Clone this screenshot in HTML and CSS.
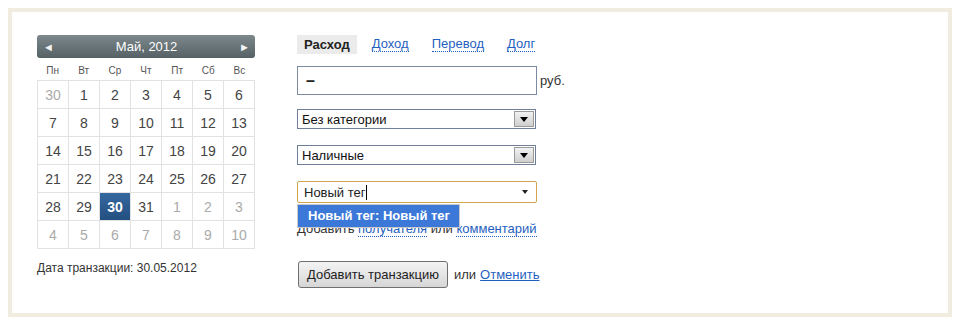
FILE: index.html
```html
<!DOCTYPE html>
<html lang="ru">
<head>
    <meta charset="UTF-8">
    <title>Новая транзакция</title>
    <link rel="stylesheet" href="styles.css">
</head>
<body>
    <div class="frame">
        <div class="calendar-col">
            <div class="cal-header">
                <span class="cal-arrow">&#9668;</span>
                <span class="cal-title">Май, 2012</span>
                <span class="cal-arrow">&#9658;</span>
            </div>
            <div class="cal-weekdays">
                <span>Пн</span><span>Вт</span><span>Ср</span><span>Чт</span><span>Пт</span><span>Сб</span><span>Вс</span>
            </div>
            <div class="cal-grid">
                <div class="day other">30</div><div class="day">1</div><div class="day">2</div><div class="day">3</div><div class="day">4</div><div class="day">5</div><div class="day">6</div>
                <div class="day">7</div><div class="day">8</div><div class="day">9</div><div class="day">10</div><div class="day">11</div><div class="day">12</div><div class="day">13</div>
                <div class="day">14</div><div class="day">15</div><div class="day">16</div><div class="day">17</div><div class="day">18</div><div class="day">19</div><div class="day">20</div>
                <div class="day">21</div><div class="day">22</div><div class="day">23</div><div class="day">24</div><div class="day">25</div><div class="day">26</div><div class="day">27</div>
                <div class="day">28</div><div class="day">29</div><div class="day selected">30</div><div class="day">31</div><div class="day other">1</div><div class="day other">2</div><div class="day other">3</div>
                <div class="day other">4</div><div class="day other">5</div><div class="day other">6</div><div class="day other">7</div><div class="day other">8</div><div class="day other">9</div><div class="day other">10</div>
            </div>
            <div class="cal-date">Дата транзакции: 30.05.2012</div>
        </div>

        <div class="form-col">
            <div class="tabs">
                <span class="tab active">Расход</span>
                <a href="#" class="tab">Доход</a>
                <a href="#" class="tab">Перевод</a>
                <a href="#" class="tab">Долг</a>
            </div>

            <div class="amount-row">
                <div class="amount-input">&ndash;</div>
                <span class="currency">руб.</span>
            </div>

            <div class="select select-category">
                <span>Без категории</span>
                <span class="select-btn"></span>
            </div>

            <div class="select select-account">
                <span>Наличные</span>
                <span class="select-btn"></span>
            </div>

            <div class="tag-wrap">
                <div class="tag-input">
                    <span>Новый тег<span class="caret"></span></span>
                    <span class="tag-arrow"></span>
                </div>
                <div class="tag-suggest">Новый тег: Новый тег</div>
            </div>

            <div class="extra">
                Добавить <a href="#" class="dotted">получателя</a> или <a href="#" class="dotted">комментарий</a>
            </div>

            <div class="actions">
                <button class="btn-submit">Добавить транзакцию</button>
                <span class="or">или</span>
                <a href="#" class="cancel">Отменить</a>
            </div>
        </div>
    </div>
</body>
</html>
```

FILE: styles.css
```css
body {
    margin: 8px;
    background-color: #fff;
    font-family: "Liberation Sans", Arial, sans-serif;
    color: #222;
}

.frame {
    border: 4px solid #f0ede0;
    display: flex;
    padding: 23px 25px 0 25px;
    height: 278px;
}

/* календарь */
.calendar-col {
    width: 218px;
}

.cal-header {
    height: 23px;
    border-radius: 3px;
    background: linear-gradient(#7c888b, #556164);
    color: #fff;
    display: flex;
    align-items: center;
    justify-content: space-between;
    padding: 0 5px 0 6px;
}

.cal-title {
    font-size: 13px;
}

.cal-arrow {
    font-size: 11px;
    color: #f4f4f4;
}

.cal-weekdays {
    display: grid;
    grid-template-columns: repeat(7, 1fr);
    height: 22px;
    align-items: center;
    font-size: 10px;
    color: #555;
    text-align: center;
    padding-top: 2px;
    box-sizing: border-box;
}

.cal-grid {
    display: grid;
    grid-template-columns: repeat(7, 30px);
    grid-auto-rows: 27px;
    gap: 1px;
    padding: 1px;
    background-color: #e2e2e2;
}

.day {
    background-color: #fff;
    display: flex;
    align-items: center;
    justify-content: center;
    font-size: 14px;
    color: #444;
}

.day.other {
    color: #aaa;
}

.day.selected {
    background: linear-gradient(#3567a0, #244f80);
    color: #fff;
    font-weight: bold;
}

.cal-date {
    margin-top: 12px;
    font-size: 12px;
    color: #333;
}

/* форма */
.form-col {
    margin-left: 42px;
    width: 300px;
    font-size: 13px;
}

.tabs {
    display: flex;
    align-items: center;
    height: 19px;
}

.tab {
    margin-right: 16px;
    color: #1f5fbf;
    text-decoration: none;
    border-bottom: 1px dotted #1f5fbf;
    line-height: 14px;
}

.tab + .tab {
    margin-right: 23px;
}

.tab.active {
    color: #222;
    font-weight: bold;
    background-color: #ebebeb;
    border-bottom: none;
    padding: 2px 7px;
    line-height: 15px;
    margin-right: 15px;
}

.amount-row {
    display: flex;
    align-items: center;
    margin-top: 12px;
}

.amount-input {
    width: 230px;
    height: 27px;
    border: 1px solid #7b8ba3;
    padding-left: 8px;
    line-height: 27px;
    font-size: 16px;
    font-weight: bold;
}

.currency {
    margin-left: 3px;
    color: #333;
}

.select {
    width: 233px;
    height: 18px;
    border: 1px solid #6f7f99;
    display: flex;
    align-items: center;
    justify-content: space-between;
    padding-left: 4px;
    color: #111;
    font-size: 13px;
}

.select-category {
    margin-top: 14px;
}

.select-account {
    margin-top: 16px;
}

.select-btn {
    width: 18px;
    height: 14px;
    margin-right: 1px;
    border: 1px solid #9a9a9a;
    background: linear-gradient(#f2f2f2, #cfcfcf);
    position: relative;
}

.select-btn::after {
    content: "";
    position: absolute;
    left: 5px;
    top: 5px;
    border-left: 4px solid transparent;
    border-right: 4px solid transparent;
    border-top: 5px solid #000;
}

.tag-wrap {
    position: relative;
    margin-top: 16px;
}

.tag-input {
    width: 224px;
    height: 20px;
    border: 1px solid #d2a54c;
    border-radius: 2px;
    display: flex;
    align-items: center;
    justify-content: space-between;
    padding: 0 8px 0 6px;
    color: #222;
}

.caret {
    display: inline-block;
    width: 1px;
    height: 15px;
    background-color: #000;
    vertical-align: -3px;
}

.tag-arrow {
    border-left: 3px solid transparent;
    border-right: 3px solid transparent;
    border-top: 4px solid #222;
}

.tag-suggest {
    position: absolute;
    left: 0;
    top: 23px;
    width: 151px;
    height: 22px;
    line-height: 22px;
    padding-left: 10px;
    background-color: #3b78d8;
    color: #fff;
    font-weight: bold;
    border: 1px solid #c8c8c8;
}

.extra {
    margin-top: 18px;
    color: #333;
    line-height: 16px;
}

.dotted {
    color: #1f5fbf;
    text-decoration: none;
    border-bottom: 1px dotted #1f5fbf;
}

.actions {
    display: flex;
    align-items: center;
    margin-top: 24px;
}

.btn-submit {
    width: 150px;
    height: 27px;
    border: 1px solid #6f6f6f;
    border-radius: 3px;
    background: linear-gradient(#f4f4f4, #d6d6d6);
    font-family: "Liberation Sans", Arial, sans-serif;
    font-size: 13px;
    color: #222;
    padding: 0;
    margin-left: 1px;
}

.or {
    margin-left: 6px;
    color: #333;
}

.cancel {
    margin-left: 4px;
    color: #1f5fbf;
}
```
